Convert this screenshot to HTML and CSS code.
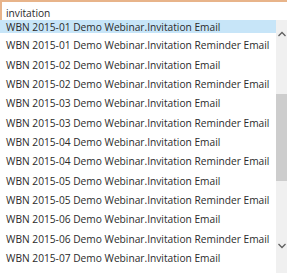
FILE: index.html
```html
<!DOCTYPE html>
<html>
<head>
  <meta charset="utf-8">
  <title>Email picker</title>
  <link rel="stylesheet" href="styles.css">
</head>
<body>
  <div class="picker">
    <div class="search">invitation</div>
    <div class="results">
      <div class="list">
        <div class="item selected partial">WBN 2015-01 Demo Webinar.Invitation Email</div>
        <div class="item">WBN 2015-01 Demo Webinar.Invitation Reminder Email</div>
        <div class="item">WBN 2015-02 Demo Webinar.Invitation Email</div>
        <div class="item">WBN 2015-02 Demo Webinar.Invitation Reminder Email</div>
        <div class="item">WBN 2015-03 Demo Webinar.Invitation Email</div>
        <div class="item">WBN 2015-03 Demo Webinar.Invitation Reminder Email</div>
        <div class="item">WBN 2015-04 Demo Webinar.Invitation Email</div>
        <div class="item">WBN 2015-04 Demo Webinar.Invitation Reminder Email</div>
        <div class="item">WBN 2015-05 Demo Webinar.Invitation Email</div>
        <div class="item">WBN 2015-05 Demo Webinar.Invitation Reminder Email</div>
        <div class="item">WBN 2015-06 Demo Webinar.Invitation Email</div>
        <div class="item">WBN 2015-06 Demo Webinar.Invitation Reminder Email</div>
        <div class="item">WBN 2015-07 Demo Webinar.Invitation Email</div>
      </div>
      <div class="scrollbar">
        <svg class="arrow" width="10" height="8" viewBox="0 0 10 8"><path d="M1.5 6 L5 2.5 L8.5 6" fill="none" stroke="#606060" stroke-width="1.3"/></svg>
        <div class="track"><div class="thumb"></div></div>
        <svg class="arrow" width="10" height="8" viewBox="0 0 10 8"><path d="M1.5 2 L5 5.5 L8.5 2" fill="none" stroke="#606060" stroke-width="1.3"/></svg>
      </div>
    </div>
  </div>
</body>
</html>
```

FILE: styles.css
```css
body {
  margin: 0;
  background: #fff;
  font-family: 'Open Sans', 'Noto Sans', sans-serif;
  font-size: 10.2px;
  color: #2b2b2b;
}

.picker {
  width: 287px;
  height: 273px;
  overflow: hidden;
}

.search {
  height: 18px;
  border-top: 2px solid #e8b48a;
  border-left: 2px solid #e8b48a;
  padding-left: 4px;
  line-height: 22px;
  overflow: hidden;
  background: #fff;
}

.results {
  display: flex;
  height: 253px;
}

.list {
  flex: 1;
  overflow: hidden;
}

.item {
  height: 19.33px;
  line-height: 24px;
  padding-left: 6px;
  white-space: nowrap;
  overflow: hidden;
}

.item.partial {
  height: 13.33px;
  line-height: 14px;
}

.item.selected {
  background: #c7e5f8;
}

.scrollbar {
  width: 11px;
  background: #f0f0f0;
  display: flex;
  flex-direction: column;
  align-items: center;
}

.arrow {
  margin: 10px 0 2px;
}

.scrollbar .arrow:last-child {
  margin: 2px 0 23px;
}

.track {
  flex: 1;
  width: 100%;
  padding-top: 54px;
}

.thumb {
  height: 87px;
  background: #cdcdcd;
}
```
